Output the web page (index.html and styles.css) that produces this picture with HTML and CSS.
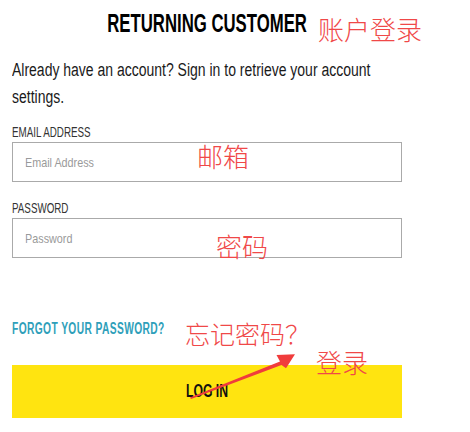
FILE: index.html
```html
<!DOCTYPE html>
<html>
<head>
<meta charset="utf-8">
<link rel="stylesheet" href="styles.css">
</head>
<body>
<div class="page">
  <section class="login">
    <h2 class="title"><span class="title-text">RETURNING CUSTOMER</span></h2>
    <p class="intro">Already have an account? Sign in to retrieve your account settings.</p>
    <label class="field">
      <span class="label">EMAIL ADDRESS</span>
      <span class="input-box"><input class="input" type="text" placeholder="Email Address"></span>
    </label>
    <label class="field">
      <span class="label">PASSWORD</span>
      <span class="input-box"><input class="input" type="password" placeholder="Password"></span>
    </label>
    <a class="forgot" href="#">FORGOT YOUR PASSWORD?</a>
    <button class="submit" type="button"><span class="submit-text">LOG IN</span></button>
  </section>
  <span class="note note-account">账户登录</span>
  <span class="note note-email">邮箱</span>
  <span class="note note-password">密码</span>
  <span class="note note-forgot">忘记密码？</span>
  <span class="note note-login">登录</span>
  <svg class="arrow" width="120" height="60" viewBox="0 0 120 60">
    <path d="M2 54.5 L92 18.5 L88.5 12 L107 11.3 L98 25.3 L93.5 22 L3 56 Z" fill="#f03c3c"/>
  </svg>
</div>
</body>
</html>
```
FILE: styles.css
```css
* { box-sizing: border-box; }
html, body { margin: 0; padding: 0; background: #fff; overflow: hidden; }
body { font-family: "Liberation Sans", Arial, sans-serif; color: #111; }
.page { position: relative; width: 470px; height: 432px; overflow: hidden; }
.login { width: 390px; margin-left: 12px; padding-top: 9px; display: flex; flex-direction: column; align-items: flex-start; }

.title { margin: 0; width: 100%; text-align: center; font-size: 25px; font-weight: bold; line-height: 28px; color: #000; }
.title-text { display: inline-block; transform: scaleX(0.67); transform-origin: center; }

.intro { margin: 20px 0 0; width: 502px; font-size: 18px; line-height: 27px; color: #1a1a1a; transform: scaleX(0.777); transform-origin: left top; }

.field { display: flex; flex-direction: column; align-items: flex-start; width: 100%; margin-top: 13px; }
.field + .field { margin-top: 18px; }
.label { display: inline-block; font-size: 14px; line-height: 16px; color: #333; margin-bottom: 2px; transform: scaleX(0.70); transform-origin: left top; }
.input-box { display: block; width: 100%; height: 40px; border: 1px solid #aaa; overflow: hidden; background: #fff; }
.input { display: block; width: 468px; height: 38px; border: 0; margin: 0; padding: 0 0 0 14.5px; background: transparent; font-family: inherit; font-size: 13px; color: #333; outline: none; transform: scaleX(0.83); transform-origin: left top; }
.input::placeholder { color: #9a9a9a; }

.forgot { margin-top: 62px; font-size: 16px; font-weight: bold; letter-spacing: 0.6px; line-height: 18px; color: #2f9fba; text-decoration: none; white-space: nowrap; transform: scaleX(0.64); transform-origin: left top; }

.submit { margin-top: 27px; width: 100%; height: 53px; border: 0; padding: 0; background: #ffe410; font-family: inherit; font-size: 18px; font-weight: bold; color: #111; cursor: pointer; }
.submit-text { display: inline-block; transform: scaleX(0.68); transform-origin: center; }

.note { position: absolute; font-family: "Noto Sans CJK SC", sans-serif; font-weight: 300; color: #f04848; font-size: 26px; line-height: 1; white-space: nowrap; }
.note-account { left: 318px; top: 16px; }
.note-email { left: 197px; top: 143px; }
.note-password { left: 216px; top: 233px; }
.note-forgot { left: 185px; top: 321px; font-size: 25px; }
.note-login { left: 316px; top: 349px; }
.arrow { position: absolute; left: 188px; top: 343px; }
```
